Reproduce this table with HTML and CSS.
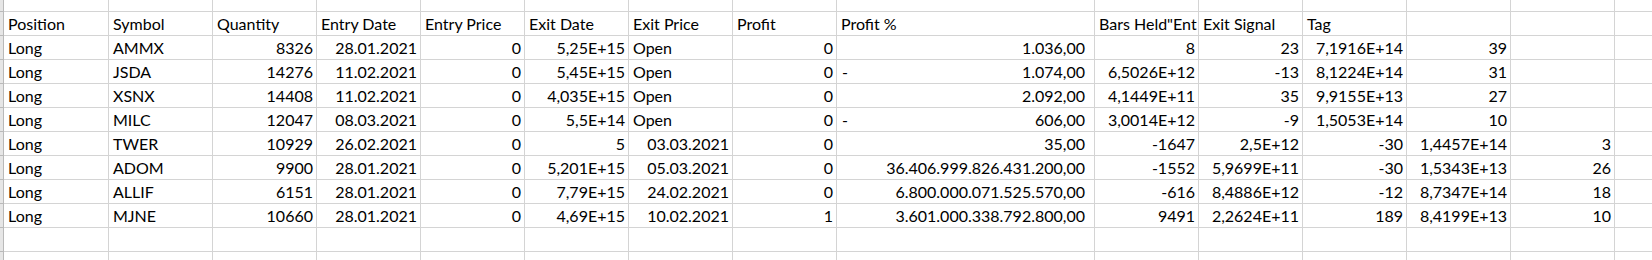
FILE: index.html
```html
<!DOCTYPE html>
<html>
<head>
<meta charset="utf-8">
<link rel="stylesheet" href="styles.css">
</head>
<body>
<table class="sheet">
  <colgroup>
    <col class="c-gut"><col class="c-std"><col class="c-std"><col class="c-std"><col class="c-std"><col class="c-std"><col class="c-std"><col class="c-std"><col class="c-std"><col class="c-wide"><col class="c-std"><col class="c-std"><col class="c-std"><col class="c-std"><col class="c-std"><col class="c-std">
  </colgroup>
  <tbody>
    <tr class="part-top"><td class="gut"></td><td></td><td></td><td></td><td></td><td></td><td></td><td></td><td></td><td></td><td></td><td></td><td></td><td></td><td></td><td></td></tr>
    <tr class="row">
      <td class="gut"></td><td>Position</td><td>Symbol</td><td>Quantity</td><td>Entry Date</td><td>Entry Price</td><td>Exit Date</td><td>Exit Price</td><td>Profit</td><td>Profit %</td><td>Bars Held"Ent</td><td>Exit Signal</td><td>Tag</td><td></td><td></td><td></td>
    </tr>
    <tr class="row">
      <td class="gut"></td><td>Long</td><td>AMMX</td><td class="r">8326</td><td class="r">28.01.2021</td><td class="r">0</td><td class="r">5,25E+15</td><td>Open</td><td class="r">0</td><td class="acct">1.036,00</td><td class="r">8</td><td class="r">23</td><td class="r">7,1916E+14</td><td class="r">39</td><td></td><td></td>
    </tr>
    <tr class="row">
      <td class="gut"></td><td>Long</td><td>JSDA</td><td class="r">14276</td><td class="r">11.02.2021</td><td class="r">0</td><td class="r">5,45E+15</td><td>Open</td><td class="r">0</td><td class="acct"><span class="sign">-</span>1.074,00</td><td class="r">6,5026E+12</td><td class="r">-13</td><td class="r">8,1224E+14</td><td class="r">31</td><td></td><td></td>
    </tr>
    <tr class="row">
      <td class="gut"></td><td>Long</td><td>XSNX</td><td class="r">14408</td><td class="r">11.02.2021</td><td class="r">0</td><td class="r">4,035E+15</td><td>Open</td><td class="r">0</td><td class="acct">2.092,00</td><td class="r">4,1449E+11</td><td class="r">35</td><td class="r">9,9155E+13</td><td class="r">27</td><td></td><td></td>
    </tr>
    <tr class="row">
      <td class="gut"></td><td>Long</td><td>MILC</td><td class="r">12047</td><td class="r">08.03.2021</td><td class="r">0</td><td class="r">5,5E+14</td><td>Open</td><td class="r">0</td><td class="acct"><span class="sign">-</span>606,00</td><td class="r">3,0014E+12</td><td class="r">-9</td><td class="r">1,5053E+14</td><td class="r">10</td><td></td><td></td>
    </tr>
    <tr class="row">
      <td class="gut"></td><td>Long</td><td>TWER</td><td class="r">10929</td><td class="r">26.02.2021</td><td class="r">0</td><td class="r">5</td><td class="r">03.03.2021</td><td class="r">0</td><td class="acct">35,00</td><td class="r">-1647</td><td class="r">2,5E+12</td><td class="r">-30</td><td class="r">1,4457E+14</td><td class="r">3</td><td></td>
    </tr>
    <tr class="row">
      <td class="gut"></td><td>Long</td><td>ADOM</td><td class="r">9900</td><td class="r">28.01.2021</td><td class="r">0</td><td class="r">5,201E+15</td><td class="r">05.03.2021</td><td class="r">0</td><td class="acct">36.406.999.826.431.200,00</td><td class="r">-1552</td><td class="r">5,9699E+11</td><td class="r">-30</td><td class="r">1,5343E+13</td><td class="r">26</td><td></td>
    </tr>
    <tr class="row">
      <td class="gut"></td><td>Long</td><td>ALLIF</td><td class="r">6151</td><td class="r">28.01.2021</td><td class="r">0</td><td class="r">7,79E+15</td><td class="r">24.02.2021</td><td class="r">0</td><td class="acct">6.800.000.071.525.570,00</td><td class="r">-616</td><td class="r">8,4886E+12</td><td class="r">-12</td><td class="r">8,7347E+14</td><td class="r">18</td><td></td>
    </tr>
    <tr class="row">
      <td class="gut"></td><td>Long</td><td>MJNE</td><td class="r">10660</td><td class="r">28.01.2021</td><td class="r">0</td><td class="r">4,69E+15</td><td class="r">10.02.2021</td><td class="r">1</td><td class="acct">3.601.000.338.792.800,00</td><td class="r">9491</td><td class="r">2,2624E+11</td><td class="r">189</td><td class="r">8,4199E+13</td><td class="r">10</td><td></td>
    </tr>
    <tr class="row">
      <td class="gut"></td><td></td><td></td><td></td><td></td><td></td><td></td><td></td><td></td><td></td><td></td><td></td><td></td><td></td><td></td><td></td>
    </tr>
    <tr class="row">
      <td class="gut"></td><td></td><td></td><td></td><td></td><td></td><td></td><td></td><td></td><td></td><td></td><td></td><td></td><td></td><td></td><td></td>
    </tr>
  </tbody>
</table>
</body>
</html>
```

FILE: styles.css
```css
html, body {
  margin: 0;
  padding: 0;
  background: #ffffff;
  overflow: hidden;
}

.sheet {
  border-collapse: separate;
  border-spacing: 0;
  table-layout: fixed;
  width: 1715px;
  font-family: Lato, "Open Sans", sans-serif;
  font-size: 16px;
  color: #000000;
}

.c-gut { width: 4px; }
.c-std { width: 104px; }
.c-wide { width: 258px; }
.sheet col:nth-child(2) { width: 105px; }

.sheet td {
  box-sizing: border-box;
  border-right: 1px solid #d4d4d4;
  border-bottom: 1px solid #d4d4d4;
  padding: 0 3px 0 4px;
  white-space: nowrap;
  overflow: hidden;
  text-overflow: clip;
  line-height: 23px;
  vertical-align: middle;
  text-align: left;
}

.part-top td {
  height: 12px;
  line-height: 11px;
}

.row td {
  height: 24px;
}

.sheet td.gut {
  padding: 0;
  background: #e6e6e6;
  border-right: 1px solid #b9b9b9;
  border-bottom: 1px solid #b9b9b9;
}

.sheet td.r {
  text-align: right;
  padding-right: 3px;
}

.sheet td.acct {
  text-align: right;
  padding-right: 9px;
  padding-left: 5px;
}

.sign {
  float: left;
}
```
